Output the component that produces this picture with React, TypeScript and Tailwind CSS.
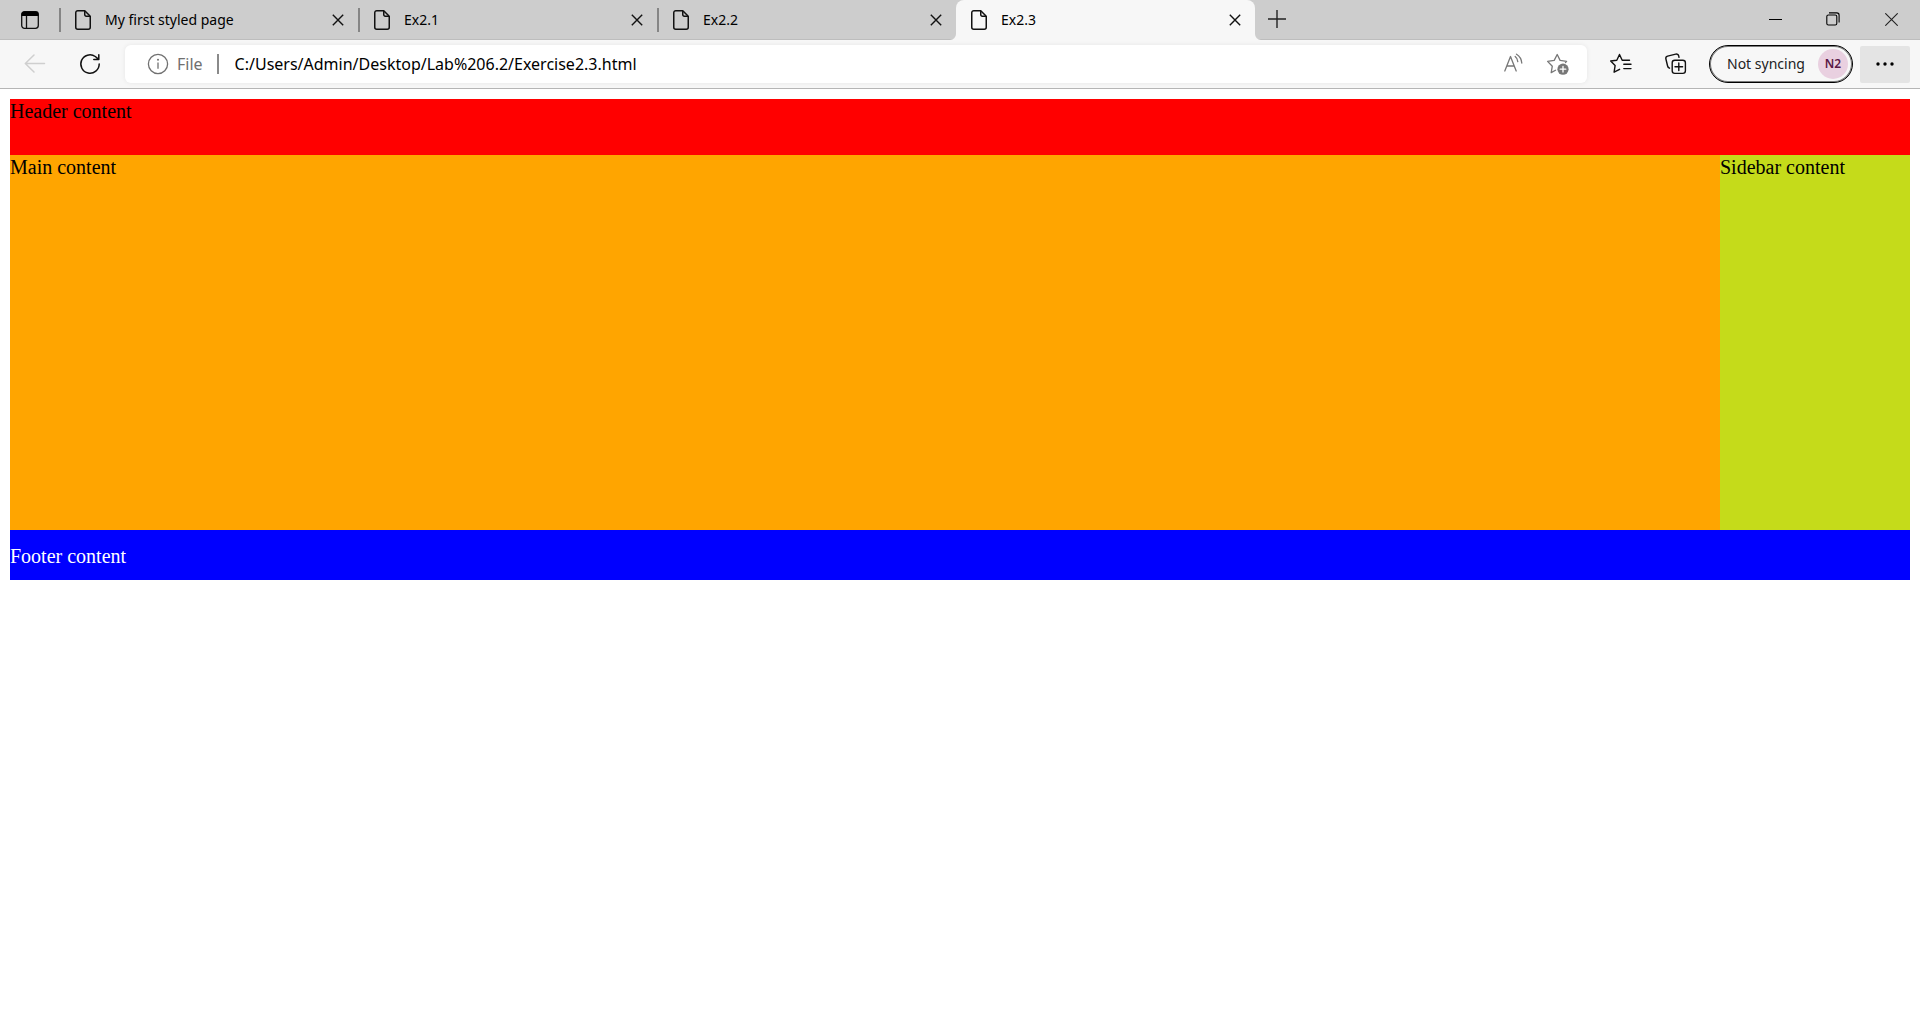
import React from "react";

type IconProps = { className?: string; children: React.ReactNode; size?: number };

function Icon({ className = "", children, size = 24 }: IconProps) {
  return (
    <svg
      width={size}
      height={size}
      viewBox={`0 0 ${size} ${size}`}
      fill="none"
      stroke="currentColor"
      strokeWidth="1.5"
      strokeLinecap="round"
      strokeLinejoin="round"
      className={`shrink-0 ${className}`}
      aria-hidden="true"
    >
      {children}
    </svg>
  );
}

function PageIcon() {
  return (
    <svg width="16" height="20" viewBox="0 0 16 20" fill="none" stroke="#111" strokeWidth="1.5" strokeLinejoin="round" className="shrink-0" aria-hidden="true">
      <path d="M2.75 .75H9.8L15.25 6.2V17.25a2 2 0 0 1-2 2H2.75a2 2 0 0 1-2-2V2.75a2 2 0 0 1 2-2Z" />
      <path d="M9.75 1V4.75a1.5 1.5 0 0 0 1.5 1.5H15" />
    </svg>
  );
}

function Tab({ title, active = false }: { title: string; active?: boolean }) {
  return (
    <div
      className={
        active
          ? "relative flex h-10 w-[299px] min-w-0 items-center rounded-t-lg bg-[#f7f7f7] pr-[10px] pl-[15px]"
          : "flex h-10 w-[299px] min-w-0 items-center pr-[10px]"
      }
    >
      {active ? (
        <>
          <svg width="6" height="6" viewBox="0 0 6 6" className="absolute bottom-0 -left-[6px]" aria-hidden="true">
            <path d="M6 0V6H0A6 6 0 0 0 6 0Z" fill="#f7f7f7" />
          </svg>
          <svg width="6" height="6" viewBox="0 0 6 6" className="absolute -right-[6px] bottom-0" aria-hidden="true">
            <path d="M0 0V6H6A6 6 0 0 1 0 0Z" fill="#f7f7f7" />
          </svg>
        </>
      ) : (
        <span className="mr-[14px] h-6 w-[2px] shrink-0 bg-[#858585]" />
      )}
      <button type="button" role="tab" aria-selected={active} className="flex min-w-0 flex-1 items-center gap-[14px] text-left">
        <PageIcon />
        <span className="truncate text-sm leading-5">{title}</span>
      </button>
      <button type="button" aria-label={`Close ${title}`} className="flex size-5 shrink-0 items-center justify-center">
        <svg width="12" height="12" viewBox="0 0 12 12" stroke="#111" strokeWidth="1.4" aria-hidden="true">
          <path d="M.8 .8 11.2 11.2M11.2 .8 .8 11.2" />
        </svg>
      </button>
    </div>
  );
}

function TabStrip() {
  return (
    <div className="flex h-10 items-center bg-[#cdcdcd] shadow-[inset_0_-1px_0_#bdbdbd]">
      <button type="button" aria-label="Tab actions menu" className="flex h-10 w-[59px] shrink-0 items-center justify-center">
        <svg width="18" height="18" viewBox="0 0 18 18" fill="none" stroke="#111" strokeWidth="1.3" aria-hidden="true">
          <rect x=".7" y=".7" width="16.6" height="16.6" rx="2.8" />
          <path d="M.5 5V3.5a3 3 0 0 1 3-3h11a3 3 0 0 1 3 3V5Z" fill="#000" stroke="none" />
          <path d="M5.5 5V17" />
        </svg>
      </button>
      <div role="tablist" className="flex min-w-0">
        <Tab title="My first styled page" />
        <Tab title="Ex2.1" />
        <Tab title="Ex2.2" />
        <Tab title="Ex2.3" active />
      </div>
      <button type="button" aria-label="New tab" className="flex h-10 w-11 shrink-0 items-center justify-center pb-[2px]">
        <svg width="18" height="18" viewBox="0 0 18 18" stroke="#222" strokeWidth="1.4" aria-hidden="true">
          <path d="M9 0V18M0 9H18" />
        </svg>
      </button>
      <div className="ml-auto flex h-10 shrink-0 pb-[2px]">
        <button type="button" aria-label="Minimize" className="flex w-[58px] items-center justify-center">
          <svg width="13" height="13" viewBox="0 0 13 13" stroke="#000" aria-hidden="true">
            <path d="M0 6.5H13" />
          </svg>
        </button>
        <button type="button" aria-label="Restore" className="flex w-[58px] items-center justify-center">
          <svg width="14" height="14" viewBox="0 0 14 14" fill="none" stroke="#000" strokeWidth="1.1" aria-hidden="true">
            <rect x=".8" y="3" width="10" height="10" rx="1.6" />
            <path d="M3 .9H10.8a2.3 2.3 0 0 1 2.3 2.3V10.6" />
          </svg>
        </button>
        <button type="button" aria-label="Close" className="flex w-[58px] items-center justify-center">
          <svg width="13" height="13" viewBox="0 0 13 13" stroke="#222" strokeWidth="1.1" aria-hidden="true">
            <path d="M.3 .3 12.7 12.7M12.7 .3 .3 12.7" />
          </svg>
        </button>
      </div>
    </div>
  );
}

function Toolbar() {
  return (
    <div className="flex h-[49px] items-center border-b border-[#b5b5b5] bg-[#f7f7f7] pr-[10px]">
      <button type="button" aria-label="Back" disabled className="ml-[23px] text-[#cfcfcf]">
        <Icon>
          <path d="M21.5 11.5H2.5M11 3 2.3 11.5 11 20" />
        </Icon>
      </button>
      <button type="button" aria-label="Refresh" className="ml-[31px] text-[#111]">
        <Icon>
          <path d="M21.2 12A9.2 9.2 0 1 1 17.3 4.5L20.7 7.3M20.8 2.7V7.5H15.8" />
        </Icon>
      </button>
      <div className="ml-[23px] flex h-[38px] min-w-0 flex-1 items-center rounded-md bg-white pr-[17px] pl-[22px] shadow-[0_0_5px_rgba(0,0,0,0.07)]">
        <button type="button" aria-label="View site information" className="flex shrink-0 items-center gap-2 text-[#707070]">
          <svg width="22" height="22" viewBox="0 0 22 22" fill="none" stroke="currentColor" strokeWidth="1.3" aria-hidden="true">
            <circle cx="11" cy="11" r="9.6" />
            <path d="M11 9.5V15.8" />
            <circle cx="11" cy="6.8" r="1" fill="currentColor" stroke="none" />
          </svg>
          <span className="text-base leading-6">File</span>
        </button>
        <span className="ml-[14px] h-5 w-[2px] shrink-0 bg-[#8a8a8a]" />
        <input
          type="text"
          aria-label="Address"
          defaultValue="C:/Users/Admin/Desktop/Lab%206.2/Exercise2.3.html"
          className="ml-4 h-8 min-w-0 flex-1 bg-transparent text-base text-black outline-none"
        />
        <button type="button" aria-label="Read aloud" className="text-[#777]">
          <Icon>
            <path d="M2.8 19 8.5 4.5 14.2 19M4.8 14H12.2" strokeWidth="1.3" />
            <path d="M13.2 4.5Q15.6 6.4 15.8 9.6M14.5 2.2Q19.3 5 19.8 11" strokeWidth="1.3" />
          </Icon>
        </button>
        <button type="button" aria-label="Add this page to favorites" className="ml-[20px] text-[#777]">
          <Icon>
            <path d="M9.5 18.2 5.2 20.6 6.3 14.2 1.6 9.4 8.2 8.4 11.2 2.5 14.1 8.4 20.6 9.4 19.5 10.5" strokeWidth="1.3" />
            <circle cx="17" cy="17.2" r="5.6" fill="currentColor" stroke="none" />
            <path d="M14.2 17.2H19.8M17 14.4V20" stroke="#fff" strokeWidth="1.3" />
          </Icon>
        </button>
      </div>
      <button type="button" aria-label="Favorites" className="ml-[22px] text-[#111]">
        <Icon>
          <path d="M20.5 8.2H13.2L10.5 2.5 7.8 8.2 1.7 9 6.1 13.6 5.1 20.2 10.6 17.3" strokeWidth="1.4" />
          <path d="M14.8 12.3H22M14.8 16.6H22" strokeWidth="1.4" />
        </Icon>
      </button>
      <button type="button" aria-label="Collections" className="ml-[31px] text-[#111]">
        <Icon>
          <rect x="8.2" y="8.2" width="13.2" height="13.2" rx="2.6" strokeWidth="1.4" />
          <path d="M14.8 11V18.6M11 14.8H18.6" strokeWidth="1.4" />
          <path d="M5.5 16.2A3 3 0 0 1 3.6 14L1.9 7A2.4 2.4 0 0 1 3.6 4.1L11.8 2.1A2.4 2.4 0 0 1 14.7 3.9L15 5.3" strokeWidth="1.4" />
        </Icon>
      </button>
      <button
        type="button"
        className="ml-[21px] flex h-[38px] w-[144px] shrink-0 items-center justify-between rounded-full border border-black pr-[4px] pl-[17px] ring-1 ring-[#000]/50 ring-inset"
      >
        <span className="text-sm leading-5 whitespace-nowrap text-[#222]">Not syncing</span>
        <span className="flex size-[30px] items-center justify-center rounded-full bg-[#e9d0e0] text-xs font-semibold text-[#5a1846]">N2</span>
      </button>
      <button type="button" aria-label="Settings and more" className="ml-[7px] flex h-[37px] w-[50px] shrink-0 items-center justify-center rounded-xs bg-[#e4e4e4]">
        <svg width="18" height="4" viewBox="0 0 18 4" fill="#000" aria-hidden="true">
          <circle cx="2" cy="2" r="1.7" />
          <circle cx="9" cy="2" r="1.7" />
          <circle cx="16" cy="2" r="1.7" />
        </svg>
      </button>
    </div>
  );
}

export default function App() {
  return (
    <div className="min-h-screen bg-white font-['Noto_Sans','Open_Sans',sans-serif] text-black">
      <TabStrip />
      <Toolbar />
      <div className="p-[10px] font-['Liberation_Serif','Times_New_Roman',serif] text-[20px] leading-6">
        <header className="min-h-14 bg-[#ff0000]">Header content</header>
        <div className="flex min-h-[375px]">
          <main className="w-9/10 bg-[#ffa500]">Main content</main>
          <aside className="w-1/10 bg-[#c5db1a]">Sidebar content</aside>
        </div>
        <footer className="bg-[#0000ff] pt-[14px] pb-3 text-white">Footer content</footer>
      </div>
    </div>
  );
}
